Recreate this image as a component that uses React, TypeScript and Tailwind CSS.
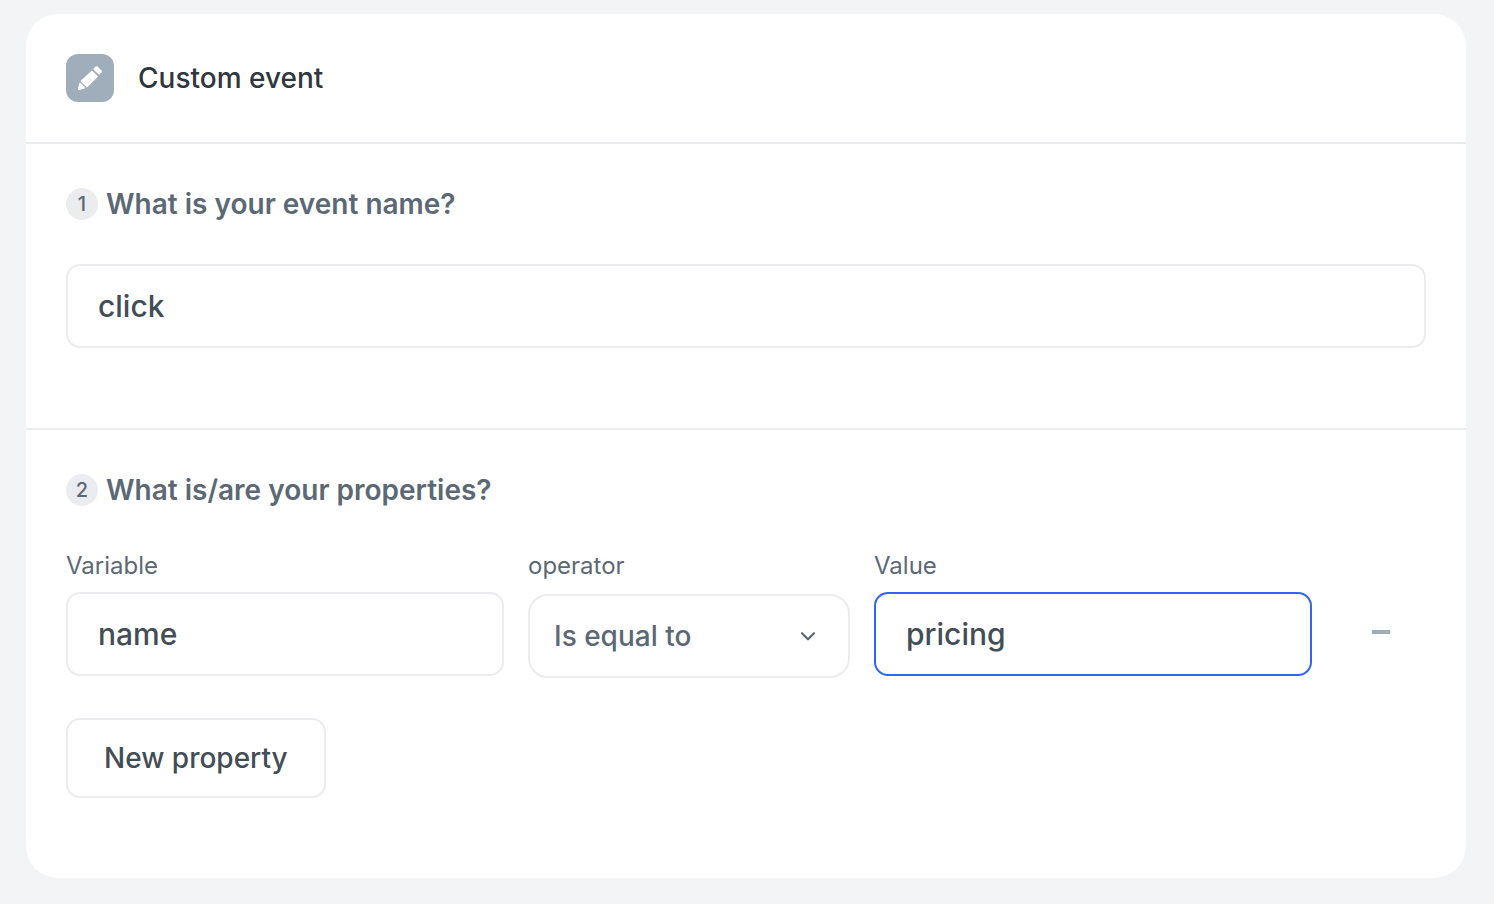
import React, { useState } from "react";

interface StepTitleProps {
  step: number;
  children: React.ReactNode;
}

const StepTitle = ({ step, children }: StepTitleProps) => (
  <div className="flex items-center gap-2">
    <span className="flex size-8 items-center justify-center rounded-full bg-[#ebecf0] text-xl font-medium text-[#5c6975]">
      {step}
    </span>
    <h2 className="text-[28px] leading-8 font-semibold text-[#5c6975]">{children}</h2>
  </div>
);

interface TextFieldProps {
  value: string;
  onChange: (value: string) => void;
  id?: string;
  label?: string;
  active?: boolean;
}

const TextField = ({ value, onChange, id, label, active }: TextFieldProps) => (
  <input
    id={id}
    aria-label={label}
    type="text"
    value={value}
    onChange={(e) => onChange(e.target.value)}
    className={`h-[84px] w-full rounded-[14px] border-2 bg-white px-[30px] text-[30px] font-medium text-[#434d56] outline-none focus:border-[#2f65f5] ${
      active ? "border-[#2f65f5]" : "border-[#ebecf0]"
    }`}
  />
);

const PencilIcon = () => (
  <svg className="size-6" viewBox="0 0 24 24" fill="white" aria-hidden="true">
    <path d="M13.4 4.9a.8.8 0 0 1 1.1 0L19.6 10a.8.8 0 0 1 0 1.1L9.5 21a.8.8 0 0 1-1.1 0L2.9 15.7a.8.8 0 0 1 0-1.1Z" />
    <path d="M15.7 2.6 17.7.6a1.4 1.4 0 0 1 2 0L23.5 4.4a1.4 1.4 0 0 1 0 2L21.6 8.3a.8.8 0 0 1-1.1 0L15.7 3.7a.8.8 0 0 1 0-1.1Z" />
    <path d="M1.3 17.1a.6.6 0 0 1 1-.3L6.9 21.4a.6.6 0 0 1-.3 1L1.2 24A1 1 0 0 1 0 22.8Z" />
  </svg>
);

const App = () => {
  const [eventName, setEventName] = useState("click");
  const [variable, setVariable] = useState("name");
  const [operator, setOperator] = useState("equal");
  const [value, setValue] = useState("pricing");

  return (
    <div className="min-h-screen bg-[#f3f4f6] pt-3.5 pr-7 pb-[26px] pl-[26px] font-['Inter',sans-serif]">
      <main className="rounded-[32px] bg-white">
        <header className="flex items-center gap-6 border-b-2 border-[#ebecf0] p-10">
          <div className="flex size-12 items-center justify-center rounded-xl bg-[#a0adba]">
            <PencilIcon />
          </div>
          <h1 className="text-[28px] leading-8 font-medium text-[#2f373e]">Custom event</h1>
        </header>

        <section className="border-b-2 border-[#ebecf0] px-10 pt-11 pb-20">
          <StepTitle step={1}>What is your event name?</StepTitle>
          <div className="mt-11 flex">
            <TextField label="Event name" value={eventName} onChange={setEventName} />
          </div>
        </section>

        <section className="px-10 pt-11 pb-20">
          <StepTitle step={2}>What is/are your properties?</StepTitle>

          <div className="mt-[42px] flex items-start gap-6 text-2xl text-[#5c6975]">
            <div className="flex min-w-0 flex-1 flex-col gap-2">
              <label htmlFor="variable" className="leading-9">Variable</label>
              <TextField id="variable" value={variable} onChange={setVariable} />
            </div>

            <div className="flex w-[322px] flex-col gap-2.5">
              <label htmlFor="operator" className="leading-9">operator</label>
              <div className="relative">
                <select
                  id="operator"
                  value={operator}
                  onChange={(e) => setOperator(e.target.value)}
                  className="h-[84px] w-full appearance-none rounded-[20px] border-2 border-[#ebecf0] bg-white px-6 pt-0.5 text-[28px] font-medium outline-none"
                >
                  <option value="equal">Is equal to</option>
                  <option value="not-equal">Is not equal to</option>
                </select>
                <svg
                  className="pointer-events-none absolute top-[30px] right-[30px] size-6"
                  viewBox="0 0 24 24"
                  fill="none"
                  stroke="currentColor"
                  strokeWidth="2.2"
                  strokeLinecap="round"
                  strokeLinejoin="round"
                  aria-hidden="true"
                >
                  <path d="m6 9.3 6 6 6-6" />
                </svg>
              </div>
            </div>

            <div className="flex min-w-0 flex-1 flex-col gap-2">
              <label htmlFor="value" className="leading-9">Value</label>
              <TextField id="value" value={value} onChange={setValue} active />
            </div>

            <button
              type="button"
              aria-label="Remove property"
              className="mt-11 flex h-20 w-[90px] items-center justify-center"
            >
              <span className="h-1 w-[18px] bg-[#a0adba]" />
            </button>
          </div>

          <button
            type="button"
            className="mt-10 h-20 rounded-[14px] border-2 border-[#ebecf0] px-9 text-[28px] font-medium text-[#434d56]"
          >
            New property
          </button>
        </section>
      </main>
    </div>
  );
};

export default App;
